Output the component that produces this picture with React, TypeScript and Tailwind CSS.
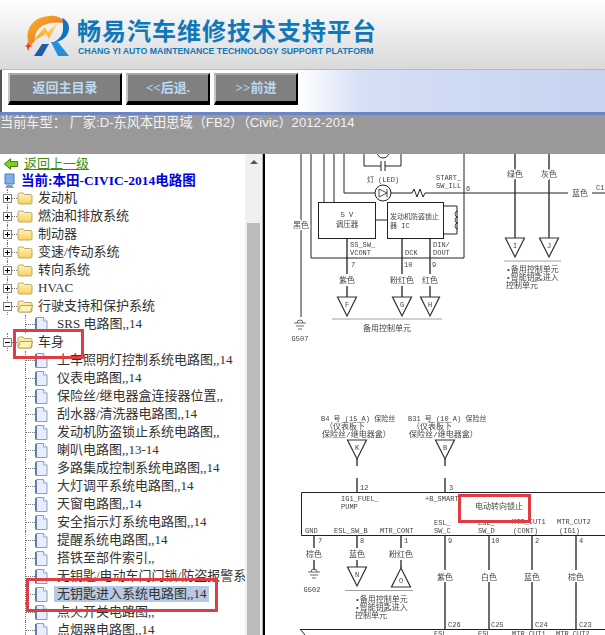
import type { ReactNode } from "react";

const serif = "font-['Liberation_Serif','Noto_Sans_CJK_SC',serif]";

type Row = { label: string; kind: "closed" | "open" | "doc"; selected?: boolean };

const rows: Row[] = [
  { label: "发动机", kind: "closed" },
  { label: "燃油和排放系统", kind: "closed" },
  { label: "制动器", kind: "closed" },
  { label: "变速/传动系统", kind: "closed" },
  { label: "转向系统", kind: "closed" },
  { label: "HVAC", kind: "closed" },
  { label: "行驶支持和保护系统", kind: "open" },
  { label: "SRS 电路图,,14", kind: "doc" },
  { label: "车身", kind: "open" },
  { label: "上车照明灯控制系统电路图,,14", kind: "doc" },
  { label: "仪表电路图,,14", kind: "doc" },
  { label: "保险丝/继电器盒连接器位置,,", kind: "doc" },
  { label: "刮水器/清洗器电路图,,14", kind: "doc" },
  { label: "发动机防盗锁止系统电路图,,", kind: "doc" },
  { label: "喇叭电路图,,13-14", kind: "doc" },
  { label: "多路集成控制系统电路图,,14", kind: "doc" },
  { label: "大灯调平系统电路图,,14", kind: "doc" },
  { label: "天窗电路图,,14", kind: "doc" },
  { label: "安全指示灯系统电路图,,14", kind: "doc" },
  { label: "提醒系统电路图,,14", kind: "doc" },
  { label: "搭铁至部件索引,,", kind: "doc" },
  { label: "无钥匙/电动车门门锁/防盗报警系统", kind: "doc" },
  { label: "无钥匙进入系统电路图,,14", kind: "doc", selected: true },
  { label: "点火开关电路图,,", kind: "doc" },
  { label: "点烟器电路图,,14", kind: "doc" },
];

function Logo() {
  return (
    <svg width="45" height="41" viewBox="0 0 45 41" className="shrink-0">
      <defs>
        <linearGradient id="ring" x1="0" y1="0" x2="1" y2="1">
          <stop offset="0" stopColor="#f9b233" />
          <stop offset="1" stopColor="#e8660f" />
        </linearGradient>
        <linearGradient id="bolt" x1="1" y1="0" x2="0" y2="1">
          <stop offset="0" stopColor="#ffe873" />
          <stop offset="1" stopColor="#f49a16" />
        </linearGradient>
      </defs>
      <path d="M5 31C-2 18 6 2 24 1C32 0 38 3 39 8C33 7 26 7 19 10C12 13 9 20 10 26Z" fill="url(#ring)" />
      <path d="M37 3C44 6 46 13 42 20C39 25 33 27 27 28C34 25 38 20 38 14C38 9 38 6 37 3Z" fill="#1473c0" />
      <path d="M33 7L24 24L21 19L8 26L20 12L23 17Z" fill="url(#bolt)" />
      <path d="M3 27L4.500 30L8 31L4.500 32L3 36L2 32L0 31L2 30Z" fill="#e2401c" />
      <path d="M17 29H24L17 41H9Z" fill="#1c5fa8" />
      <path d="M26 27H33L44 41H33Z" fill="#2490dc" />
    </svg>
  );
}

function Header() {
  return (
    <div className="flex h-[69px] items-start bg-gradient-to-b from-white to-[#d9d9d9] pl-[25px] pt-[15px]">
      <Logo />
      <div className="ml-[7px] mt-[-1px]">
        <div className="font-['Noto_Sans_CJK_SC',sans-serif] text-[24px] font-bold leading-[32px] tracking-[1px] text-[#1078b8]">
          畅易汽车维修技术支持平台
        </div>
        <div className="ml-px mt-[-1px] whitespace-nowrap font-['Liberation_Sans',sans-serif] text-[8.75px] font-bold leading-[12px] text-[#1078b8]">
          CHANG YI AUTO MAINTENANCE TECHNOLOGY SUPPORT PLATFORM
        </div>
      </div>
    </div>
  );
}

function NavButton({ width, children }: { width: string; children: ReactNode }) {
  return (
    <button
      className={`${width} flex h-[32px] items-center justify-center border-b-[4px] border-l-[2px] border-r-[2px] border-t-[2px] border-b-black border-l-[#c4c4c4] border-r-black border-t-[#a8a8a8] bg-[#808080] ${serif} text-[13px] font-bold text-[#bcd9f2]`}
    >
      {children}
    </button>
  );
}

function Toolbar() {
  return (
    <div className="flex h-[46px] border-b-[3px] border-t-[1px] border-b-[#6a86c8] border-t-[#a9bce6] bg-gradient-to-r from-white from-[49%] via-[#d5dff5] via-[60%] to-[#c6d4f0]">
      <div className="flex gap-[4px] border-l-[2px] border-l-[#555] pl-[6px] pt-[3px]">
        <NavButton width="w-[114px]">返回主目录</NavButton>
        <NavButton width="w-[84px]">&lt;&lt;后退.</NavButton>
        <NavButton width="w-[84px]">&gt;&gt;前进</NavButton>
      </div>
    </div>
  );
}

function CarBar() {
  return (
    <div className="h-[39px] bg-[#999999] font-['Liberation_Sans','Noto_Sans_CJK_SC',sans-serif] text-[13.2px] leading-[15px] text-[#f2f2f2]">
      当前车型： 厂家:D-东风本田思域（FB2）（Civic）2012-2014
    </div>
  );
}

function Folder({ open }: { open: boolean }) {
  return (
    <svg width="16" height="14" viewBox="0 0 16 14" className="shrink-0">
      <defs>
        <linearGradient id="fold" x1="0" y1="0" x2="0" y2="1">
          <stop offset="0" stopColor="#fff3b8" />
          <stop offset="1" stopColor="#fbd15a" />
        </linearGradient>
      </defs>
      <path d="M1 4Q1 2 2.500 2H6L7.500 3.500H13.500Q15 3.500 15 5V11.500Q15 13 13.500 13H2.500Q1 13 1 11.500Z" fill="url(#fold)" stroke="#a89458" strokeWidth=".8" />
      {open && <path d="M1.200 12.500L3.500 6.500H15.500L13.500 13H2Z" fill="#fff0b4" stroke="#a89458" strokeWidth=".8" />}
    </svg>
  );
}

function Doc() {
  return (
    <svg width="13" height="15" viewBox="0 0 13 15" className="shrink-0">
      <path d="M1.500 .5H8.500L12 4V14.500H1.500Z" fill="#e6eeff" stroke="#7f93bd" strokeWidth=".9" />
      <path d="M8.500 .5V4H12" fill="#ffffff" stroke="#7f93bd" strokeWidth=".8" />
      <path d="M.8 1V14.500" stroke="#24407c" strokeWidth="1" />
    </svg>
  );
}

function Expander({ open }: { open: boolean }) {
  return (
    <span className="relative h-[9px] w-[9px] shrink-0 border border-[#808080] bg-white">
      <span className="absolute left-[1px] top-[3px] h-px w-[5px] bg-black" />
      {!open && <span className="absolute left-[3px] top-[1px] h-[5px] w-px bg-black" />}
    </span>
  );
}

function TreeRow({ row }: { row: Row }) {
  const isDoc = row.kind === "doc";
  return (
    <div className={`relative flex h-[18px] items-center whitespace-nowrap ${isDoc ? "pl-[25px]" : "pl-[3px]"}`}>
      {isDoc ? (
        <>
          <span className="absolute left-[25px] top-0 h-full border-l border-dotted border-[#777]" />
          <span className="w-[10px] shrink-0 border-t border-dotted border-[#777]" />
          <Doc />
        </>
      ) : (
        <>
          <span className="absolute left-[7px] top-0 h-full border-l border-dotted border-[#777]" />
          <Expander open={row.kind === "open"} />
          <span className="w-[5px] shrink-0 border-t border-dotted border-[#777]" />
          <Folder open={row.kind === "open"} />
        </>
      )}
      <span
        className={`shrink-0 text-[13px] leading-[16px] text-[#333] ${isDoc ? (row.selected ? "ml-[6px] bg-[#b8c9e4] pl-[3px] pr-[2px]" : "ml-[9px]") : "ml-[5px]"}`}
      >
        {row.label}
      </span>
    </div>
  );
}

function Tree() {
  return (
    <div className={`relative w-[263px] shrink-0 overflow-hidden bg-white ${serif}`}>
      <div className="flex h-full">
        <div className="w-[245px] shrink-0 overflow-hidden">
          <div className="flex h-[18px] items-center pl-[3px] pt-[2px]">
            <svg width="16" height="12" viewBox="0 0 15 12" className="shrink-0">
              <path d="M.8 6L7 .8V3.600H14.200V8.400H7V11.200Z" fill="#7ed321" stroke="#3c7d12" strokeWidth="1" />
            </svg>
            <a className="ml-[5px] text-[13px] leading-[16px] text-[#3d8f0e] underline">返回上一级</a>
          </div>
          <div className="flex h-[17px] items-center pl-[3px]">
            <svg width="13" height="16" viewBox="0 0 13 16" className="shrink-0">
              <path d="M2 1H11V11H2Z" fill="#7fb0ea" stroke="#4a78b8" />
              <path d="M4 12H9L11 15H2Z" fill="#8a98b0" />
            </svg>
            <span className="ml-[5px] whitespace-nowrap text-[13.5px] font-bold leading-[16px] text-[#0000e0]">当前:本田-CIVIC-2014电路图</span>
          </div>
          {rows.map((row) => (
            <TreeRow key={row.label} row={row} />
          ))}
        </div>
        <div className="flex w-[17px] shrink-0 flex-col items-center bg-[#f0f0f0] pt-[6px]">
          <span className="h-0 w-0 border-x-[4px] border-b-[4px] border-x-transparent border-b-[#555]" />
          <span className="mt-[59px] h-[420px] w-[13px] bg-[#bcbcbc]" />
        </div>
        <div className="w-px bg-[#b0b0b0]" />
      </div>
      <div className="absolute left-[13px] top-[175px] h-[30px] w-[71px] border-[3px] border-[#e03c44]" />
      <div className="absolute left-[26px] top-[424px] h-[34px] w-[192px] border-[3px] border-[#e03c44]" />
    </div>
  );
}

function Lbl({ x, y, t, a = "middle", bg, size }: { x: number; y: number; t: string; a?: "start" | "middle"; bg?: boolean; size?: number }) {
  // latin in the scan is narrow, so mixed labels run a bit smaller than plain CJK ones
  const fontSize = size ?? (/[A-Za-z0-9]/.test(t) ? 7 : 8);
  return (
    <text x={x} y={y} textAnchor={a} fontSize={fontSize} className={bg ? "[paint-order:stroke] [stroke:#fff] [stroke-width:3px]" : ""}>
      {t}
    </text>
  );
}

function Tri({ x, y, t, up }: { x: number; y: number; t: string; up?: boolean }) {
  const pts = up ? `${x - 9.500},${y + 19} ${x + 9.500},${y + 19} ${x},${y}` : `${x - 9.500},${y} ${x + 9.500},${y} ${x},${y + 19}`;
  return (
    <>
      <polygon points={pts} fill="#fff" stroke="#333" strokeWidth="1.200" />
      <text x={x} y={up ? y + 15 : y + 10} textAnchor="middle" fontSize="7">
        {t}
      </text>
    </>
  );
}

function Ground({ x, y }: { x: number; y: number }) {
  return (
    <path d={`M${x - 6} ${y}H${x + 6}M${x - 4} ${y + 3}H${x + 4}M${x - 2} ${y + 6}H${x + 2}M${x - 3} ${y}A3 3 0 0 1 ${x + 3} ${y}`} stroke="#444" fill="none" strokeWidth=".8" />
  );
}

function Diagram() {
  return (
    <div className="min-w-0 flex-1 overflow-hidden border-l-[2px] border-l-black bg-white pl-px">
      <svg width="339" height="481" viewBox="266 154 339 481" fill="#444" className="block blur-[0.4px] font-['Liberation_Mono','Noto_Sans_CJK_SC',monospace]">
        <g fill="none" stroke="#222" strokeWidth="1">
          <path d="M301 154V317M311 154V258H464V154M324 154V202M334 154V202M344 154V193H375M391 193H412L414 189L417 197L420 189L423 197L425 193H568M592 193H605" />
          <path d="M364 154V166H381M385 166H401V154M381 161V171M385 161V171" />
          <circle cx="383" cy="193" r="8" fill="#fff" />
          <path d="M379 189V197L387 193ZM387 189V197" strokeWidth=".8" />
          <circle cx="383" cy="152" r="6" fill="#fff" />
          <rect x="318.500" y="202.500" width="57" height="36" />
          <rect x="387.500" y="202.500" width="56" height="36" />
          <path d="M375 220H387M443 206H457V234H443" />
          <path d="M458 211A3 3 0 0 0 458 217A3 3 0 0 0 458 223A3 3 0 0 0 458 229" strokeWidth=".8" />
          <path d="M347 238V274M347 286V297M402 238V274M402 286V297M430 238V274M430 286V297" strokeWidth="1.300" />
          <path d="M515 154V238M549 154V238" strokeWidth="1.300" />
        </g>
        <Lbl x={301} y={228} t="黑色" bg />
        <Lbl x={383} y={182} t="灯 (LED)" />
        <Lbl x={436} y={180} t="START_" a="start" />
        <Lbl x={436} y={188} t="SW_ILL" a="start" />
        <Lbl x={466} y={191} t="6" a="start" />
        <Lbl x={347} y={217} t="5 V" />
        <Lbl x={347} y={227} t="调压器" size={7.500} />
        <Lbl x={390} y={219} t="发动机防盗锁止" a="start" size={7} />
        <Lbl x={390} y={228} t="器 IC" a="start" />
        <Lbl x={350} y={247} t="SS_SW_" a="start" />
        <Lbl x={350} y={255} t="VCONT" a="start" />
        <Lbl x={405} y={255} t="DCK" a="start" />
        <Lbl x={433} y={247} t="DIN/" a="start" />
        <Lbl x={433} y={255} t="DOUT" a="start" />
        <Lbl x={351} y={267} t="7" a="start" />
        <Lbl x={404} y={267} t="10" a="start" />
        <Lbl x={432} y={267} t="9" a="start" />
        <Lbl x={347} y={283} t="紫色" />
        <Lbl x={402} y={283} t="粉红色" />
        <Lbl x={430} y={283} t="红色" />
        <Lbl x={515} y={177} t="绿色" bg />
        <Lbl x={549} y={177} t="灰色" bg />
        <Lbl x={580} y={196} t="蓝色" />
        <Lbl x={596} y={190} t="C1" a="start" />
        <Tri x={347} y={297} t="F" />
        <Tri x={402} y={297} t="G" />
        <Tri x={430} y={297} t="H" />
        <Tri x={515} y={238} t="I" />
        <Tri x={549} y={238} t="J" />
        <path d="M332 319H442M504 261H561" stroke="#888" strokeWidth=".8" fill="none" />
        <Lbl x={387} y={331} t="备用控制单元" />
        <Lbl x={506} y={272} t="•备用控制单元" a="start" />
        <Lbl x={506} y={280} t="•智能钥匙进入" a="start" />
        <Lbl x={506} y={288} t="控制单元" a="start" />
        <Ground x={300} y={323} />
        <Lbl x={300} y={341} t="G507" />

        <Lbl x={321} y={421} t="B4 号 (15 A) 保险丝" a="start" />
        <Lbl x={325} y={429} t="（仪表板下" a="start" />
        <Lbl x={322} y={437} t="保险丝/继电器盒）" a="start" />
        <Lbl x={408} y={421} t="B31 号 (10 A) 保险丝" a="start" />
        <Lbl x={412} y={429} t="（仪表板下" a="start" />
        <Lbl x={409} y={437} t="保险丝/继电器盒）" a="start" />
        <Tri x={357} y={440} t="K" />
        <Tri x={445} y={440} t="B" />
        <g fill="none" stroke="#222" strokeWidth="1.300">
          <path d="M357 459V466M357 478V492M445 459V466M445 478V492" />
          <path d="M605 492.500H301.500V535.500H605" strokeWidth="1" />
          <path d="M314 535V548M314 560V570M357 535V548M357 560V567M401 535V548M401 560V568" />
          <path d="M445 535V570M445 582V629M489 535V570M489 582V629M532 535V570M532 582V629M576 535V570M576 582V629" />
          <path d="M300 629.500H605M300 629L305 635" strokeWidth="1" />
        </g>
        <Lbl x={360} y={490} t="12" a="start" />
        <Lbl x={449} y={490} t="3" a="start" />
        <Lbl x={341} y={501} t="IG1_FUEL_" a="start" />
        <Lbl x={341} y={509} t="PUMP" a="start" />
        <Lbl x={425} y={501} t="+B_SMART" a="start" />
        <Lbl x={475} y={509} t="电动转向锁止" a="start" />
        <Lbl x={305} y={533} t="GND" a="start" />
        <Lbl x={334} y={533} t="ESL_SW_B" a="start" />
        <Lbl x={380} y={533} t="MTR_CONT" a="start" />
        <Lbl x={434} y={525} t="ESL_" a="start" />
        <Lbl x={434} y={533} t="SW_C" a="start" />
        <Lbl x={478} y={525} t="ESL_" a="start" />
        <Lbl x={478} y={533} t="SW_D" a="start" />
        <Lbl x={512} y={524} t="MTR_CUT1" a="start" />
        <Lbl x={513} y={533} t="(CONT)" a="start" />
        <Lbl x={557} y={524} t="MTR_CUT2" a="start" />
        <Lbl x={559} y={533} t="(IG1)" a="start" />
        <Lbl x={318} y={543} t="7" a="start" />
        <Lbl x={360} y={543} t="8" a="start" />
        <Lbl x={404} y={543} t="1" a="start" />
        <Lbl x={448} y={543} t="9" a="start" />
        <Lbl x={491} y={543} t="10" a="start" />
        <Lbl x={535} y={543} t="2" a="start" />
        <Lbl x={579} y={543} t="4" a="start" />
        <Lbl x={314} y={557} t="棕色" />
        <Lbl x={357} y={557} t="蓝色" />
        <Lbl x={401} y={557} t="粉红色" />
        <Lbl x={445} y={580} t="紫色" />
        <Lbl x={489} y={580} t="白色" />
        <Lbl x={532} y={580} t="蓝色" />
        <Lbl x={576} y={580} t="棕色" />
        <Ground x={314} y={572} />
        <Lbl x={312} y={592} t="G502" />
        <Tri x={357} y={567} t="N" />
        <Tri x={401} y={568} t="O" up />
        <path d="M345 590.500H413" stroke="#888" strokeWidth=".8" />
        <Lbl x={355} y={602} t="•备用控制单元" a="start" />
        <Lbl x={355} y={610} t="•智能钥匙进入" a="start" />
        <Lbl x={355} y={618} t="控制单元" a="start" />
        <Lbl x={448} y={627} t="C26" a="start" />
        <Lbl x={491} y={627} t="C25" a="start" />
        <Lbl x={535} y={627} t="C24" a="start" />
        <Lbl x={579} y={627} t="C23" a="start" />
        <Lbl x={434} y={636} t="ESL" a="start" />
        <Lbl x={478} y={636} t="ESL" a="start" />
        <Lbl x={512} y={636} t="MTR_CUT1" a="start" />
        <Lbl x={556} y={636} t="MTR_CUT2" a="start" />
        <rect x="459.500" y="495.500" width="70" height="26" fill="none" stroke="#e03c44" strokeWidth="3" />
      </svg>
    </div>
  );
}

export default function App() {
  return (
    <div className="flex h-[635px] w-[605px] flex-col overflow-hidden bg-white">
      <Header />
      <Toolbar />
      <CarBar />
      <div className="flex min-h-0 flex-1">
        <Tree />
        <Diagram />
      </div>
    </div>
  );
}
